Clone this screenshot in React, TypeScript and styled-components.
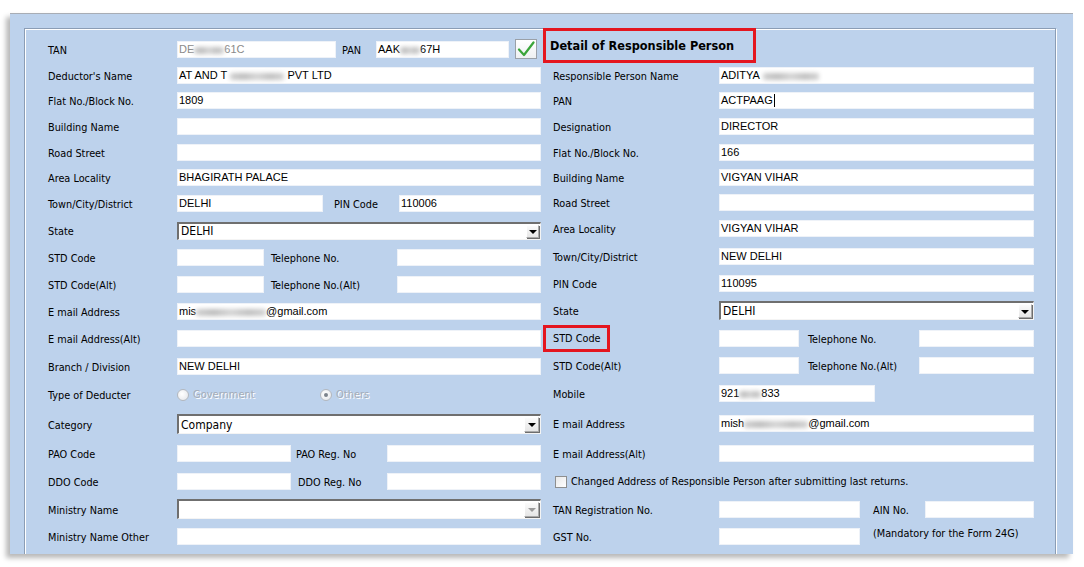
import React from "react";
import styled, { createGlobalStyle } from "styled-components";

const Global = createGlobalStyle`
  html, body { margin: 0; padding: 0; background: #ffffff; }
  body { font-family: "DejaVu Sans Condensed", "DejaVu Sans", sans-serif; }
  * { box-sizing: border-box; }
`;

const UI = `"DejaVu Sans Condensed", "DejaVu Sans", sans-serif`;
const BOX = `"Liberation Sans", Arial, sans-serif`;

const Page = styled.div`
  padding: 13px 11px 0 10px;
  height: 567px;
  overflow: hidden;
`;

const Panel = styled.div`
  width: 1063px;
  height: 541px;
  background: #bdd2ec;
  border-top: 1px solid #a8adb5;
  box-shadow: -4px 4px 5px rgba(0, 0, 0, 0.28);
  padding: 14px 17px 0 14px;
  overflow: hidden;
`;

const GroupBox = styled.div`
  height: 620px;
  border: 1px solid #8b9db5;
  box-shadow: inset 1px 1px 0 #ffffff, 1px 1px 0 #ffffff;
  padding: 7px 20px 0 23px;
`;

const Columns = styled.div`
  display: flex;
  gap: 12px;
`;

const Column = styled.div<{ $w: number }>`
  width: ${(p) => p.$w}px;
  flex: none;
  display: flex;
  flex-direction: column;
`;

const Row = styled.div<{ $h: number }>`
  height: ${(p) => p.$h}px;
  display: flex;
  align-items: center;
`;

const Label = styled.div<{ $w: number }>`
  width: ${(p) => p.$w}px;
  flex: none;
  font-family: ${UI};
  font-size: 10.8px;
  color: #000;
  padding-top: 2px;
  white-space: nowrap;
`;

const InlineLabel = styled.div<{ $ml: number; $w: number }>`
  margin-left: ${(p) => p.$ml}px;
  width: ${(p) => p.$w}px;
  flex: none;
  font-family: ${UI};
  font-size: 10.8px;
  color: #000;
  padding-top: 2px;
  white-space: nowrap;
`;

const TextBox = styled.div<{ $w?: number; $h?: number; $muted?: boolean }>`
  ${(p) => (p.$w ? `width: ${p.$w}px; flex: none;` : `flex: 1;`)}
  height: ${(p) => p.$h ?? 17}px;
  background: #ffffff;
  border: 1px solid #eef2f8;
  font-family: ${BOX};
  font-size: 11px;
  line-height: 13px;
  padding: 1px 0 0 1px;
  color: ${(p) => (p.$muted ? "#8a8a8a" : "#000")};
  white-space: nowrap;
  overflow: hidden;
  display: flex;
  align-items: flex-start;
`;

const Blur = styled.span<{ $w: number }>`
  display: inline-block;
  flex: none;
  width: ${(p) => p.$w}px;
  height: 7px;
  margin-top: 4px;
  border-radius: 2px;
  background: linear-gradient(90deg, #cfcfcf, #bdbdbd 25%, #d4d4d4 50%, #c0c0c0 75%, #d2d2d2);
  filter: blur(2px);
`;

const Caret = styled.span`
  display: inline-block;
  width: 1px;
  height: 13px;
  background: #000;
  margin-left: 1px;
`;

const Select = styled.div<{ $h: number }>`
  flex: 1;
  height: ${(p) => p.$h}px;
  background: #ffffff;
  border-top: 2px solid #6f6f6f;
  border-left: 2px solid #6f6f6f;
  border-right: 1px solid #f4f4f4;
  border-bottom: 1px solid #f4f4f4;
  display: flex;
  align-items: center;
  justify-content: space-between;
  padding: 0 1px 0 2px;
  font-family: ${UI};
  font-size: 12px;
  color: #000;
`;

const DropButton = styled.div<{ $s: number; $disabled?: boolean }>`
  width: ${(p) => p.$s}px;
  height: ${(p) => p.$s}px;
  flex: none;
  background: linear-gradient(#fbfbfb, #e6e6e6);
  border: 1px solid #a9a9a9;
  border-top-color: #ffffff;
  border-left-color: #ffffff;
  box-shadow: 1px 1px 0 #6d6d6d;
  display: flex;
  align-items: center;
  justify-content: center;
  &::after {
    content: "";
    border-left: 4px solid transparent;
    border-right: 4px solid transparent;
    border-top: 4px solid ${(p) => (p.$disabled ? "#9a9a9a" : "#000")};
    margin-top: 1px;
  }
`;

const CheckButton = styled.div`
  margin-left: 6px;
  width: 22px;
  height: 20px;
  flex: none;
  background: linear-gradient(#ffffff, #eef0f2);
  border: 1px solid #9aa0a8;
  display: flex;
  align-items: center;
  justify-content: center;
`;

const HeaderBox = styled.div`
  align-self: flex-start;
  margin-top: -8px;
  margin-left: -10px;
  width: 213px;
  height: 35px;
  border: 3px solid #e4161f;
  padding: 0 0 0 4px;
  display: flex;
  align-items: center;
  font-family: ${UI};
  font-weight: bold;
  font-size: 12.6px;
  color: #000;
  white-space: nowrap;
`;

const Highlight = styled.span`
  display: inline-flex;
  align-items: center;
  margin-left: -10px;
  margin-top: -2px;
  width: 67px;
  height: 27px;
  border: 3px solid #e4161f;
  padding: 1px 0 0 7px;
`;

const RadioGroup = styled.div`
  display: flex;
  align-items: center;
  font-family: ${UI};
  font-size: 11px;
`;

const RadioItem = styled.div<{ $w: number }>`
  width: ${(p) => p.$w}px;
  display: flex;
  align-items: center;
  gap: 4px;
  color: #a4acb8;
  text-shadow: 1px 1px 0 #ffffff;
`;

const Radio = styled.span<{ $on?: boolean }>`
  width: 12px;
  height: 12px;
  border-radius: 50%;
  border: 1px solid #b4b8be;
  background: radial-gradient(circle at 40% 40%, #ffffff, #e2e4e8);
  display: inline-flex;
  align-items: center;
  justify-content: center;
  flex: none;
  &::after {
    content: "";
    width: 4px;
    height: 4px;
    border-radius: 50%;
    background: ${(p) => (p.$on ? "#7c838c" : "transparent")};
  }
`;

const CheckLine = styled.label`
  display: flex;
  align-items: center;
  gap: 4px;
  margin-left: 2px;
  font-family: ${UI};
  font-size: 10.8px;
  color: #000;
  white-space: nowrap;
`;

const Box = styled.span`
  width: 12px;
  height: 12px;
  flex: none;
  background: linear-gradient(135deg, #e8e8e8, #ffffff);
  border: 1px solid #8e8f8f;
`;

const Note = styled.div`
  margin-left: 13px;
  font-family: ${UI};
  font-size: 10.8px;
  color: #000;
  white-space: nowrap;
  padding-bottom: 6px;
`;

const L = 129;
const R = 166;

export default function App() {
  return (
    <>
      <Global />
      <Page>
        <Panel>
          <GroupBox>
            <Columns>
              <Column $w={493}>
                <Row $h={26}>
                  <Label $w={L}>TAN</Label>
                  <TextBox $w={159} $muted>
                    DE<Blur $w={30} />61C
                  </TextBox>
                  <InlineLabel $ml={6} $w={34}>PAN</InlineLabel>
                  <TextBox $w={133}>
                    AAK<Blur $w={20} />67H
                  </TextBox>
                  <CheckButton>
                    <svg width="18" height="16" viewBox="0 0 18 16">
                      <path d="M2 8.5 L7 14 L16.5 1.5" fill="none" stroke="#3aa53a" strokeWidth="2.2" strokeLinecap="round" strokeLinejoin="round" />
                    </svg>
                  </CheckButton>
                </Row>
                <Row $h={26}>
                  <Label $w={L}>Deductor's Name</Label>
                  <TextBox>
                    AT AND T&nbsp;<Blur $w={54} />&nbsp;PVT LTD
                  </TextBox>
                </Row>
                <Row $h={25}>
                  <Label $w={L}>Flat No./Block No.</Label>
                  <TextBox>1809</TextBox>
                </Row>
                <Row $h={27}>
                  <Label $w={L}>Building Name</Label>
                  <TextBox />
                </Row>
                <Row $h={25}>
                  <Label $w={L}>Road Street</Label>
                  <TextBox />
                </Row>
                <Row $h={25}>
                  <Label $w={L}>Area Locality</Label>
                  <TextBox>BHAGIRATH PALACE</TextBox>
                </Row>
                <Row $h={27}>
                  <Label $w={L}>Town/City/District</Label>
                  <TextBox $w={146}>DELHI</TextBox>
                  <InlineLabel $ml={11} $w={65}>PIN Code</InlineLabel>
                  <TextBox>110006</TextBox>
                </Row>
                <Row $h={27}>
                  <Label $w={L}>State</Label>
                  <Select $h={18}>
                    DELHI
                    <DropButton $s={13} />
                  </Select>
                </Row>
                <Row $h={27}>
                  <Label $w={L}>STD Code</Label>
                  <TextBox $w={87} />
                  <InlineLabel $ml={7} $w={126}>Telephone No.</InlineLabel>
                  <TextBox />
                </Row>
                <Row $h={27}>
                  <Label $w={L}>STD Code(Alt)</Label>
                  <TextBox $w={87} />
                  <InlineLabel $ml={7} $w={126}>Telephone No.(Alt)</InlineLabel>
                  <TextBox />
                </Row>
                <Row $h={26}>
                  <Label $w={L}>E mail Address</Label>
                  <TextBox>
                    mis<Blur $w={70} />@gmail.com
                  </TextBox>
                </Row>
                <Row $h={28}>
                  <Label $w={L}>E mail Address(Alt)</Label>
                  <TextBox />
                </Row>
                <Row $h={28}>
                  <Label $w={L}>Branch / Division</Label>
                  <TextBox>NEW DELHI</TextBox>
                </Row>
                <Row $h={29}>
                  <Label $w={L}>Type of Deducter</Label>
                  <RadioGroup>
                    <RadioItem $w={143}>
                      <Radio />
                      Government
                    </RadioItem>
                    <RadioItem $w={80}>
                      <Radio $on />
                      Others
                    </RadioItem>
                  </RadioGroup>
                </Row>
                <Row $h={30}>
                  <Label $w={L}>Category</Label>
                  <Select $h={20}>
                    Company
                    <DropButton $s={15} />
                  </Select>
                </Row>
                <Row $h={28}>
                  <Label $w={L}>PAO Code</Label>
                  <TextBox $w={114} />
                  <InlineLabel $ml={5} $w={91}>PAO Reg. No</InlineLabel>
                  <TextBox />
                </Row>
                <Row $h={28}>
                  <Label $w={L}>DDO Code</Label>
                  <TextBox $w={114} />
                  <InlineLabel $ml={7} $w={89}>DDO Reg. No</InlineLabel>
                  <TextBox />
                </Row>
                <Row $h={28}>
                  <Label $w={L}>Ministry Name</Label>
                  <Select $h={20}>
                    <span />
                    <DropButton $s={15} $disabled />
                  </Select>
                </Row>
                <Row $h={27}>
                  <Label $w={L}>Ministry Name Other</Label>
                  <TextBox />
                </Row>
                <Row $h={27}>
                  <Label $w={L} />
                  <TextBox />
                </Row>
              </Column>

              <Column $w={481}>
                <Row $h={26}>
                  <HeaderBox>Detail of Responsible Person</HeaderBox>
                </Row>
                <Row $h={26}>
                  <Label $w={R}>Responsible Person Name</Label>
                  <TextBox>
                    ADITYA&nbsp;<Blur $w={56} />
                  </TextBox>
                </Row>
                <Row $h={25}>
                  <Label $w={R}>PAN</Label>
                  <TextBox>
                    ACTPAAG<Caret />
                  </TextBox>
                </Row>
                <Row $h={27}>
                  <Label $w={R}>Designation</Label>
                  <TextBox>DIRECTOR</TextBox>
                </Row>
                <Row $h={25}>
                  <Label $w={R}>Flat No./Block No.</Label>
                  <TextBox>166</TextBox>
                </Row>
                <Row $h={25}>
                  <Label $w={R}>Building Name</Label>
                  <TextBox>VIGYAN VIHAR</TextBox>
                </Row>
                <Row $h={25}>
                  <Label $w={R}>Road Street</Label>
                  <TextBox />
                </Row>
                <Row $h={27}>
                  <Label $w={R}>Area Locality</Label>
                  <TextBox>VIGYAN VIHAR</TextBox>
                </Row>
                <Row $h={28}>
                  <Label $w={R}>Town/City/District</Label>
                  <TextBox>NEW DELHI</TextBox>
                </Row>
                <Row $h={27}>
                  <Label $w={R}>PIN Code</Label>
                  <TextBox>110095</TextBox>
                </Row>
                <Row $h={27}>
                  <Label $w={R}>State</Label>
                  <Select $h={19}>
                    DELHI
                    <DropButton $s={14} />
                  </Select>
                </Row>
                <Row $h={28}>
                  <Label $w={R}>
                    <Highlight>STD Code</Highlight>
                  </Label>
                  <TextBox $w={80} />
                  <InlineLabel $ml={9} $w={111}>Telephone No.</InlineLabel>
                  <TextBox />
                </Row>
                <Row $h={27}>
                  <Label $w={R}>STD Code(Alt)</Label>
                  <TextBox $w={80} />
                  <InlineLabel $ml={9} $w={111}>Telephone No.(Alt)</InlineLabel>
                  <TextBox />
                </Row>
                <Row $h={29}>
                  <Label $w={R}>Mobile</Label>
                  <TextBox $w={156}>
                    921<Blur $w={22} />833
                  </TextBox>
                </Row>
                <Row $h={30}>
                  <Label $w={R}>E mail Address</Label>
                  <TextBox>
                    mish<Blur $w={64} />@gmail.com
                  </TextBox>
                </Row>
                <Row $h={30}>
                  <Label $w={R}>E mail Address(Alt)</Label>
                  <TextBox />
                </Row>
                <Row $h={27}>
                  <CheckLine>
                    <Box />
                    Changed Address of Responsible Person after submitting last returns.
                  </CheckLine>
                </Row>
                <Row $h={28}>
                  <Label $w={R}>TAN Registration No.</Label>
                  <TextBox $w={141} />
                  <InlineLabel $ml={13} $w={52}>AIN No.</InlineLabel>
                  <TextBox />
                </Row>
                <Row $h={27}>
                  <Label $w={R}>GST No.</Label>
                  <TextBox $w={141} />
                  <Note>(Mandatory for the Form 24G)</Note>
                </Row>
              </Column>
            </Columns>
          </GroupBox>
        </Panel>
      </Page>
    </>
  );
}
